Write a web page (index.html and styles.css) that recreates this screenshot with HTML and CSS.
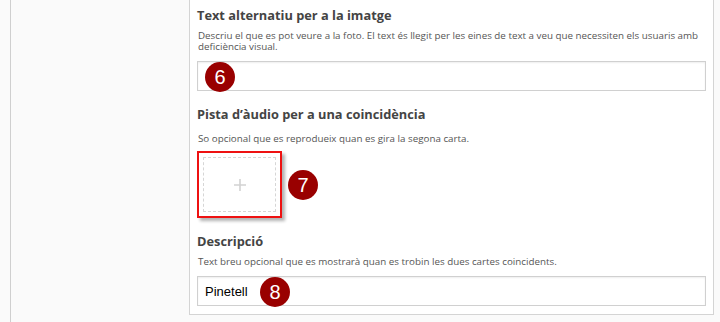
FILE: index.html
```html
<!DOCTYPE html>
<html lang="ca">
<head>
    <meta charset="UTF-8">
    <meta name="viewport" content="width=device-width, initial-scale=1.0">
    <title>Editor - Targetes</title>
    <link rel="stylesheet" href="styles.css">
</head>
<body>
    <div class="page">
        <aside class="sidebar"></aside>

        <main class="panel">
            <div class="field">
                <label class="field-label" for="alt">Text alternatiu per a la imatge</label>
                <p class="field-desc">Descriu el que es pot veure a la foto. El text és llegit per les eines de text a veu que necessiten els usuaris amb deficiència visual.</p>
                <div class="input-wrap">
                    <input type="text" id="alt" class="text-input">
                    <span class="badge badge-six">6</span>
                </div>
            </div>

            <div class="field">
                <label class="field-label">Pista d’àudio per a una coincidència</label>
                <p class="field-desc field-desc-audio">So opcional que es reprodueix quan es gira la segona carta.</p>
                <div class="upload-row">
                    <div class="upload-frame">
                        <div class="upload">
                            <svg width="12" height="12" viewBox="0 0 12 12">
                                <path d="M6 0v12M0 6h12" stroke="#d2d2d2" stroke-width="1.6"/>
                            </svg>
                        </div>
                    </div>
                    <span class="badge">7</span>
                </div>
            </div>

            <div class="field">
                <label class="field-label" for="desc">Descripció</label>
                <p class="field-desc">Text breu opcional que es mostrarà quan es trobin les dues cartes coincidents.</p>
                <div class="input-wrap">
                    <input type="text" id="desc" class="text-input" value="Pinetell">
                    <span class="badge badge-eight">8</span>
                </div>
            </div>
        </main>
    </div>
</body>
</html>
```

FILE: styles.css
```css
body {
    margin: 0;
    padding: 0;
    background-color: #fafafa;
    font-family: 'Open Sans', sans-serif;
}

.page {
    display: flex;
    align-items: flex-start;
    padding-left: 10px;
}

/* Left column */
.sidebar {
    width: 178px;
    height: 322px;
    border-left: 1px solid #cfcfcf;
    background-color: #fafafa;
}

/* Form panel */
.panel {
    width: 509px;
    padding: 6px 7px 8px 7px;
    background-color: #fff;
    border: 1px solid #d4d4d4;
    border-top: none;
}

.field {
    margin-bottom: 14px;
}

.field:last-child {
    margin-bottom: 0;
}

.field-label {
    display: block;
    font-size: 12.8px;
    line-height: 18px;
    font-weight: bold;
    color: #444;
}

.field-desc {
    margin: 6px 0 9px 1px;
    font-size: 9.8px;
    line-height: 11px;
    color: #555;
}

.field-desc-audio {
    margin-top: 10px;
}

.input-wrap {
    position: relative;
}

.text-input {
    display: block;
    width: 100%;
    height: 30px;
    box-sizing: border-box;
    padding: 0 7px;
    font-family: 'Liberation Sans', Arial, sans-serif;
    font-size: 13px;
    color: #000;
    background-color: #fff;
    border: 1px solid #d0d0d0;
    box-shadow: inset 0 1px 2px rgba(0, 0, 0, 0.07);
    outline: none;
}

/* Upload box */
.upload-row {
    display: flex;
    align-items: center;
    gap: 6px;
    margin-top: -2px;
}

.upload-frame {
    padding: 4px;
    border: 2px solid #ee1111;
    background-color: #fff;
    box-shadow: 3px 3px 3px rgba(0, 0, 0, 0.3);
}

.upload {
    width: 71px;
    height: 53px;
    border: 1px dashed #d6d6d6;
    display: flex;
    align-items: center;
    justify-content: center;
}

/* Numbered callouts */
.badge {
    width: 30px;
    height: 30px;
    border-radius: 50%;
    background-color: #990000;
    color: #fff;
    font-family: 'Liberation Sans', Arial, sans-serif;
    font-size: 20px;
    line-height: 30px;
    text-align: center;
}

.badge-six,
.badge-eight {
    position: absolute;
    top: 1px;
}

.badge-six {
    left: 8px;
}

.badge-eight {
    left: 63px;
}
```
